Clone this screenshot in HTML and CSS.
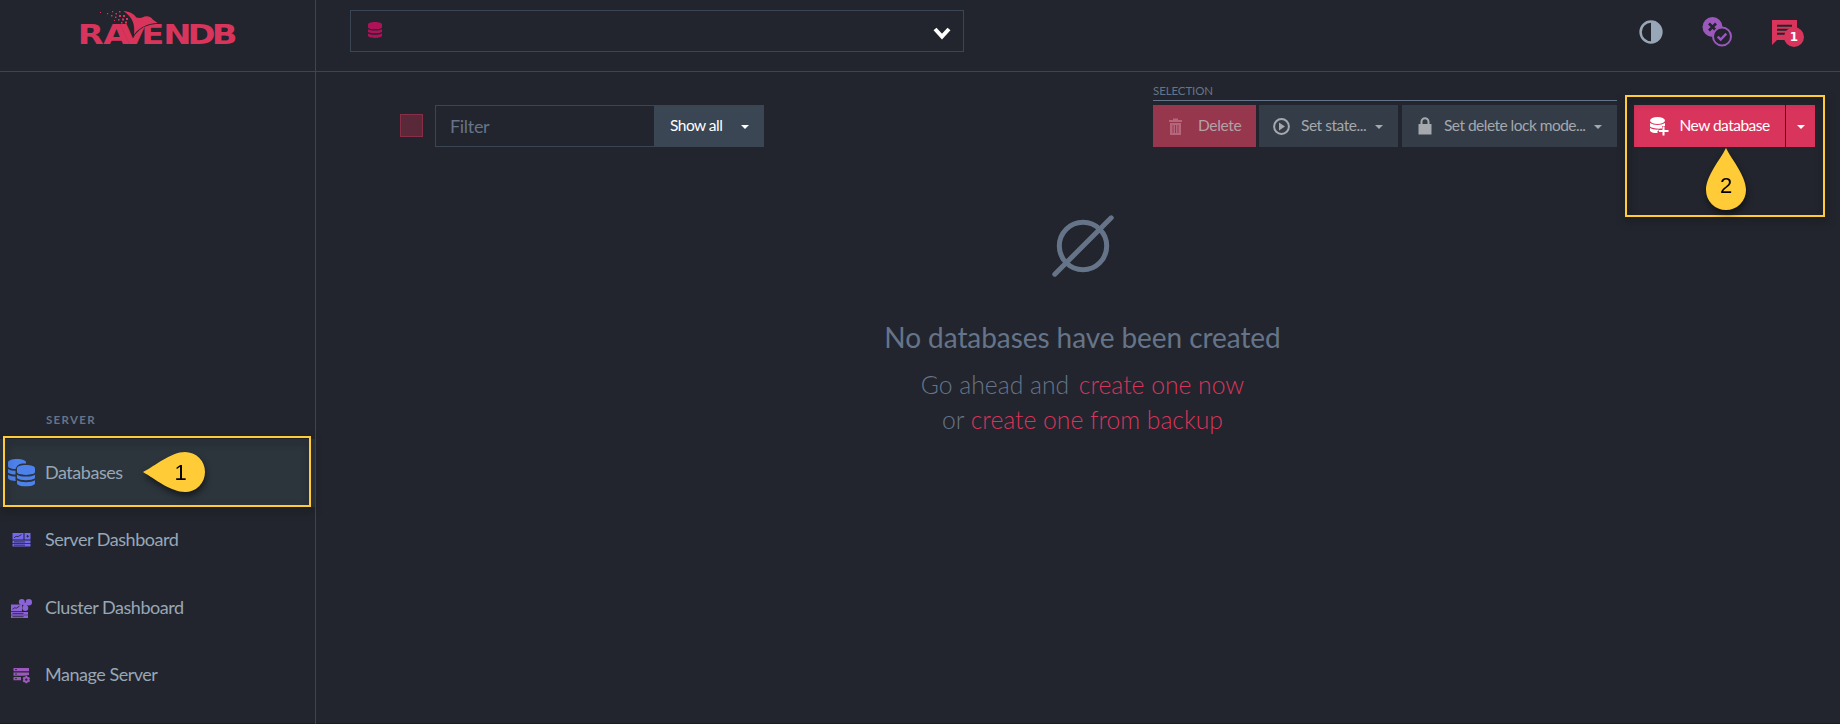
FILE: index.html
```html
<!DOCTYPE html>
<html lang="en">
<head>
<meta charset="utf-8">
<title>RavenDB Studio - Databases</title>
<link rel="stylesheet" href="styles.css">
</head>
<body>
<svg width="0" height="0" class="defs">
  <symbol id="stack" viewBox="0 0 14 20" preserveAspectRatio="none">
    <path d="M7 0C3 0 0 1.200 0 3v3.600C0 8.200 3 9.200 7 9.200s7-1 7-2.600V3C14 1.200 11 0 7 0z"/>
    <path d="M0 9c1.400 1.200 4 1.700 7 1.700s5.600-.5 7-1.700v3.400c-1.400 1.200-4 1.700-7 1.700s-5.600-.5-7-1.700z"/>
    <path d="M0 14.300c1.400 1.200 4 1.700 7 1.700s5.600-.5 7-1.700V17c0 1.800-3 3-7 3s-7-1.200-7-3z"/>
  </symbol>
</svg>
<div class="app">
  <header class="topbar">
    <div class="brand">
      <svg class="logo" width="162" height="44" viewBox="0 0 162 44">
        <text class="logo-text" transform="scale(1.300 1)" x="-.2 19.500 32.200 48.700 65.500 84.300 102.900" y="36">RAVENDB</text>
        <path class="bird" d="M45.300 3c6 .3 11 3 13 6.500 2 0 3.500 1 6 0 4-2.500 9-1 10.500 2L79.500 15c-8 .3-17 3-23.500 11.500 1-9-.5-17-10.700-23.500z"/>
        <path class="feather" d="M46 5.500c6 3.500 9.500 9.500 8 19"/>
        <path d="M22 4h1v1h-1zM29 5h1.200v1.200H29zM34 3h1.200v1.200H34zM37.500 5h1.500v1.500h-1.500zM41 3h1.500v1.500H41zM33 7h1.500v1.500H33zM37 8.500h1.500V10H37zM41 7h2v2h-2zM45 7h2v2h-2zM40 11h1.500v1.500H40zM44 10.500h2v2h-2zM48 10h2v2h-2zM43 14h1.500v1.500H43zM47 13.500h2v2h-2zM36 12h1v1h-1z"/>
      </svg>
    </div>
    <div class="db-select">
      <svg class="db-select-icon" width="14" height="16"><use href="#stack" width="14" height="16"/></svg>
      <svg class="chev" width="18" height="14" viewBox="0 0 18 14"><path d="M2 3l7 7.500L16 3"/></svg>
    </div>
    <div class="tools">
      <svg width="24" height="24" viewBox="0 0 24 24" class="theme"><circle cx="12" cy="12" r="10.400"/><path d="M12 2a10 10 0 0 1 0 20z"/></svg>
      <svg width="30" height="30" viewBox="0 0 30 30" class="checks"><circle class="full" cx="10.500" cy="10" r="10"/><path class="x" d="M7 6.500l7 7M14 6.500l-7 7"/><circle class="ring" cx="20" cy="19.500" r="9"/><path class="tick" d="M15.700 19.600l3 3 5.600-6"/></svg>
      <div class="notice">
        <svg width="26" height="26" viewBox="0 0 26 26"><path class="bubble" d="M0 0h25v20H5l-5 5z"/><path class="lines" d="M5 5.700h15M5 9.700h15M5 13.700h9"/></svg>
        <span class="badge">1</span>
      </div>
    </div>
  </header>

  <aside class="sidebar">
    <h2 class="nav-title">SERVER</h2>
    <nav>
      <a class="nav-item active">
        <svg width="28" height="28" viewBox="0 0 28 28" class="c-blue"><use href="#stack" x="0" y="0" width="18" height="22"/><rect class="mask" x="7.500" y="4.500" width="20.500" height="23.500" rx="7"/><use href="#stack" x="9" y="6" width="18" height="21.500"/></svg>
        <span>Databases</span>
      </a>
      <a class="nav-item">
        <svg width="28" height="22" viewBox="0 0 28 22" class="c-indigo"><path d="M4.500 4h11v6.500h-11zM16.500 4h6v6.500h-6zM4.500 11.500h18v2.700h-18zM4.500 15h18v2.500h-18z"/><path class="cut" d="M6 8.800l2-1.500 2 .3 3.500-2M18.500 7.300h2.500M19.500 6v2.500M6 12.900h11M6 16.200h11"/></svg>
        <span>Server Dashboard</span>
      </a>
      <a class="nav-item">
        <svg width="28" height="22" viewBox="0 0 28 22" class="c-violet"><path d="M3 7.500h11v6.700H3zM3 15h17v2.700H3zM3 18.300h17V21H3z"/><circle cx="13.800" cy="5" r="3"/><circle cx="20.800" cy="5.200" r="3.200"/><circle cx="17.300" cy="10.900" r="3"/><path d="M13.500 5.700l4 5 3-5z"/><path class="cut" d="M4.500 12.300l2-1.500 2 .3 3-2M4.500 16.400h11M4.500 19.700h11"/></svg>
        <span>Cluster Dashboard</span>
      </a>
      <a class="nav-item">
        <svg width="28" height="22" viewBox="0 0 28 22" class="c-purple"><path d="M5.500 4H21v3.200H5.500zM5.500 8.500H21V11l-5 .7H5.500zM5.500 13h7.500v3.200H5.500z"/><path class="cut" d="M7 5.600h2M7 10.100h2M7 14.600h2"/><circle class="gear" cx="18.300" cy="15.600" r="2.200"/><path class="teeth" d="M18.300 11.800v1.500M18.300 17.800v1.500M15 13.700l1.300.8M20.300 16.700l1.300.8M15 17.500l1.300-.8M20.300 14.500l1.300-.8"/></svg>
        <span>Manage Server</span>
      </a>
    </nav>
    <div class="hl hl-nav"></div>
    <svg class="pin pin-1" width="66" height="46" viewBox="0 0 66 46"><path d="M0 21C12 15 28 1 42 1a20 20 0 0 1 0 40C28 41 12 28 0 21z"/><text x="37.500" y="28.500">1</text></svg>
  </aside>

  <main class="content">
    <div class="toolbar">
      <span class="checkbox"></span>
      <div class="filter"><span class="filter-input">Filter</span><button class="btn show"><span>Show all</span><i class="caret"></i></button></div>
      <div class="selection">
        <div class="selection-title">SELECTION</div>
        <div class="selection-row">
          <button class="btn del"><svg width="14" height="17" viewBox="0 0 14 17"><path d="M0 2h4V.5h5V2h4v2H0zM1 5h11v12H1z"/><path class="bars" d="M4 7v8M6.500 7v8M9 7v8"/></svg><span>Delete</span></button>
          <button class="btn state"><svg width="17" height="17" viewBox="0 0 17 17"><circle cx="8.500" cy="8.500" r="7.400"/><path d="M6 4.500l6 4-6 4z"/></svg><span>Set state...</span><i class="caret"></i></button>
          <button class="btn lock"><svg width="14" height="18" viewBox="0 0 14 18"><path d="M.5 7h13v10.500H.5z"/><path class="shackle" d="M3.500 8V4.800a3.500 3.500 0 0 1 7 0V8"/></svg><span>Set delete lock mode...</span><i class="caret"></i></button>
        </div>
      </div>
      <div class="create">
        <button class="btn new"><svg width="19" height="19" viewBox="0 0 19 19"><ellipse cx="7.500" cy="3.500" rx="7.500" ry="3.500"/><path d="M0 6c4 2.600 11 2.600 15 0v3h-3v2.500C7 12 2 11.300 0 9.500zM0 11c2.500 1.400 5 1.800 8.500 1.600V14h-1v2C4 16.300 1 15.500 0 14z"/><path class="plus" d="M13.500 9.500v9M9 14h9.500"/></svg><span>New database</span></button>
        <button class="btn more"><i class="caret"></i></button>
        <div class="hl hl-new"></div>
        <svg class="pin pin-2" width="46" height="68" viewBox="0 0 46 68"><path d="M21 1c6 12 20 28 20 42a20 20 0 0 1-40 0C1 29 15 13 21 1z"/><text x="21" y="45.500">2</text></svg>
      </div>
    </div>
    <section class="empty">
      <svg width="64" height="64" viewBox="0 0 64 64"><circle cx="32" cy="32" r="23.700"/><path d="M3.800 60.200L60.200 3.800"/></svg>
      <h1>No databases have been created</h1>
      <p>Go ahead and <a class="now">create one now</a><br>or <a>create one from backup</a></p>
    </section>
  </main>
</div>
</body>
</html>
```

FILE: styles.css
```css
* { box-sizing: border-box; }
body { margin: 0; background: #22252d; font-family: Lato, sans-serif; color: #98a7b7; overflow: hidden; }
.defs { display: block; }
.app { display: grid; grid-template: 72px 652px / 316px 1524px; width: 1840px; height: 724px; border-bottom: 1px solid #1a1b20; }
h1, h2, p { margin: 0; font-weight: 400; }
.topbar { grid-column: 1 / 3; display: flex; border-bottom: 1px solid #3b4654; }
.brand { width: 316px; border-right: 1px solid #3b4654; padding: 8px 0 0 78px; }
.logo { display: block; fill: #d9345b; overflow: visible; }
.logo-text { font: 700 26px "DejaVu Sans", sans-serif; }
.bird { stroke: #22252d; stroke-width: 1.600; paint-order: stroke; }
.feather { fill: none; stroke: #22252d; stroke-width: .7; }
.db-select { width: 614px; height: 42px; margin: 10px 0 0 34px; border: 1px solid #3b4654; display: flex; justify-content: space-between; padding: 11px 12px 0 17px; }
.db-select-icon { fill: #b0125a; }
.chev { margin-top: 4px; fill: none; stroke: #fff; stroke-width: 4; }
.tools { display: flex; margin: 0 36px 0 auto; }
.theme { margin: 20px 0 0; fill: #98a7b7; }
.theme circle { fill: none; stroke: #98a7b7; stroke-width: 2.500; }
.checks { margin: 17px 0 0 39px; }
.checks .full { fill: #9c58bd; }
.checks .x { stroke: #22252d; stroke-width: 2.600; }
.checks .ring { fill: #22252d; stroke: #9c58bd; stroke-width: 2; }
.checks .tick { fill: none; stroke: #9c58bd; stroke-width: 2.400; }
.notice { position: relative; margin: 20px 0 0 40px; width: 32px; }
.bubble { fill: #d9345b; }
.lines { stroke: #22252d; stroke-width: 2; }
.badge { position: absolute; left: 12px; top: 7px; width: 20px; height: 20px; border-radius: 50%; background: #d9345b; color: #fff; font: 700 12px/20px "DejaVu Sans", sans-serif; text-align: center; }

.sidebar { position: relative; border-right: 1px solid #3b4654; padding-top: 339px; }
.nav-title { margin-left: 46px; height: 28px; font-size: 11.500px; line-height: 18px; font-weight: 700; letter-spacing: 1.300px; color: #667489; }
.nav-item { display: flex; align-items: center; height: 67.500px; padding: 0 0 2px 8px; font-size: 18px; letter-spacing: -.47px; }
.nav-item span { margin-left: 9px; }
.nav-item svg { position: relative; top: 1px; }
.active { background: #2c343c; }
.c-blue { fill: #4d82ec; }
.c-indigo { fill: #7468ec; }
.c-violet { fill: #8c62d8; }
.c-purple { fill: #9c58bd; }
.mask { fill: #2c343c; }
.cut { fill: none; stroke: #22252d; stroke-width: .8; }
.gear { fill: none; stroke: #9c58bd; stroke-width: 2; }
.teeth { stroke: #9c58bd; stroke-width: 1.800; }
.hl { position: absolute; border: 2px solid #ffcb36; filter: drop-shadow(1px 4px 4px rgba(0, 0, 0, .5)); }
.hl-nav { left: 3px; top: 364px; width: 308px; height: 71px; }
.pin { position: absolute; fill: #ffcb36; filter: drop-shadow(1px 4px 3px rgba(0, 0, 0, .5)); overflow: visible; }
.pin text { font: 22px "Liberation Sans", sans-serif; fill: #000; text-anchor: middle; }
.pin-1 { left: 143px; top: 379px; }

.toolbar { display: flex; padding: 33px 0 0 84px; height: 75px; }
.checkbox { width: 23px; height: 23px; margin-top: 9px; background: #592839; border: 1px solid #8a2d46; }
.filter { display: flex; width: 329px; height: 42px; margin-left: 12px; border: 1px solid #3b4654; }
.filter-input { flex: 1; padding-left: 14px; font-size: 18px; line-height: 41px; letter-spacing: -.3px; color: #667489; }
.btn { border: 0; margin: 0; padding: 0; height: 42px; display: flex; align-items: center; font: 15.500px/20px Lato, sans-serif; letter-spacing: -.52px; color: #fff; white-space: nowrap; }
.btn span { position: relative; top: -1px; }
.btn svg { flex: none; }
.caret { border: 4.500px solid transparent; border-top-color: currentColor; border-bottom: 0; margin-top: 2px; }
.show { width: 110px; margin: -1px -1px 0 0; padding: 0 15px 0 16px; justify-content: space-between; background: #3b4654; }
.selection { margin: -20px 0 0 389px; width: 464px; }
.selection-title { height: 16px; border-bottom: 1px solid #667489; font-size: 11.500px; line-height: 12px; letter-spacing: -.1px; color: #667489; }
.selection-row { display: flex; margin-top: 4px; }
.del { width: 103px; padding-left: 16px; background: #96374e; color: #b5a0a8; letter-spacing: -.35px; }
.del svg { fill: #b5667a; margin-right: 15px; }
.bars { stroke: #96374e; }
.state { width: 139px; margin-left: 3px; padding-left: 14px; background: #343c47; color: #a5a8ad; letter-spacing: -.45px; }
.state svg { fill: #a5a8ad; margin-right: 11px; }
.state circle { fill: none; stroke: #a5a8ad; stroke-width: 2; }
.state .caret, .lock .caret { margin-left: 9px; }
.lock { width: 215px; margin-left: 4px; padding-left: 16px; background: #343c47; color: #a5a8ad; }
.lock svg { fill: #a5a8ad; margin-right: 12px; }
.shackle { fill: none; stroke: #a5a8ad; stroke-width: 2; }
.create { position: relative; display: flex; gap: 1px; margin-left: 17px; height: 42px; }
.new { width: 151px; padding-left: 16px; background: #d9345b; }
.new svg { fill: #fff; margin-right: 10.500px; }
.plus { stroke: #fff; stroke-width: 2; }
.more { width: 29px; justify-content: center; background: #d9345b; }
.hl-new { left: -9px; top: -10px; width: 200px; height: 122px; }
.pin-2 { left: 71px; top: 42px; }

.empty { display: flex; flex-direction: column; align-items: center; padding: 67px 0 0 9px; color: #667489; }
.empty svg { fill: none; stroke: #667489; stroke-width: 5; stroke-linecap: round; }
.empty h1 { margin-top: 39px; font-size: 28px; line-height: 40px; letter-spacing: -.07px; }
.empty p { margin-top: 10px; font-size: 24.700px; line-height: 35px; font-weight: 300; text-align: center; }
.empty a { color: #d9345b; }
.now { margin-left: 3px; }
```
